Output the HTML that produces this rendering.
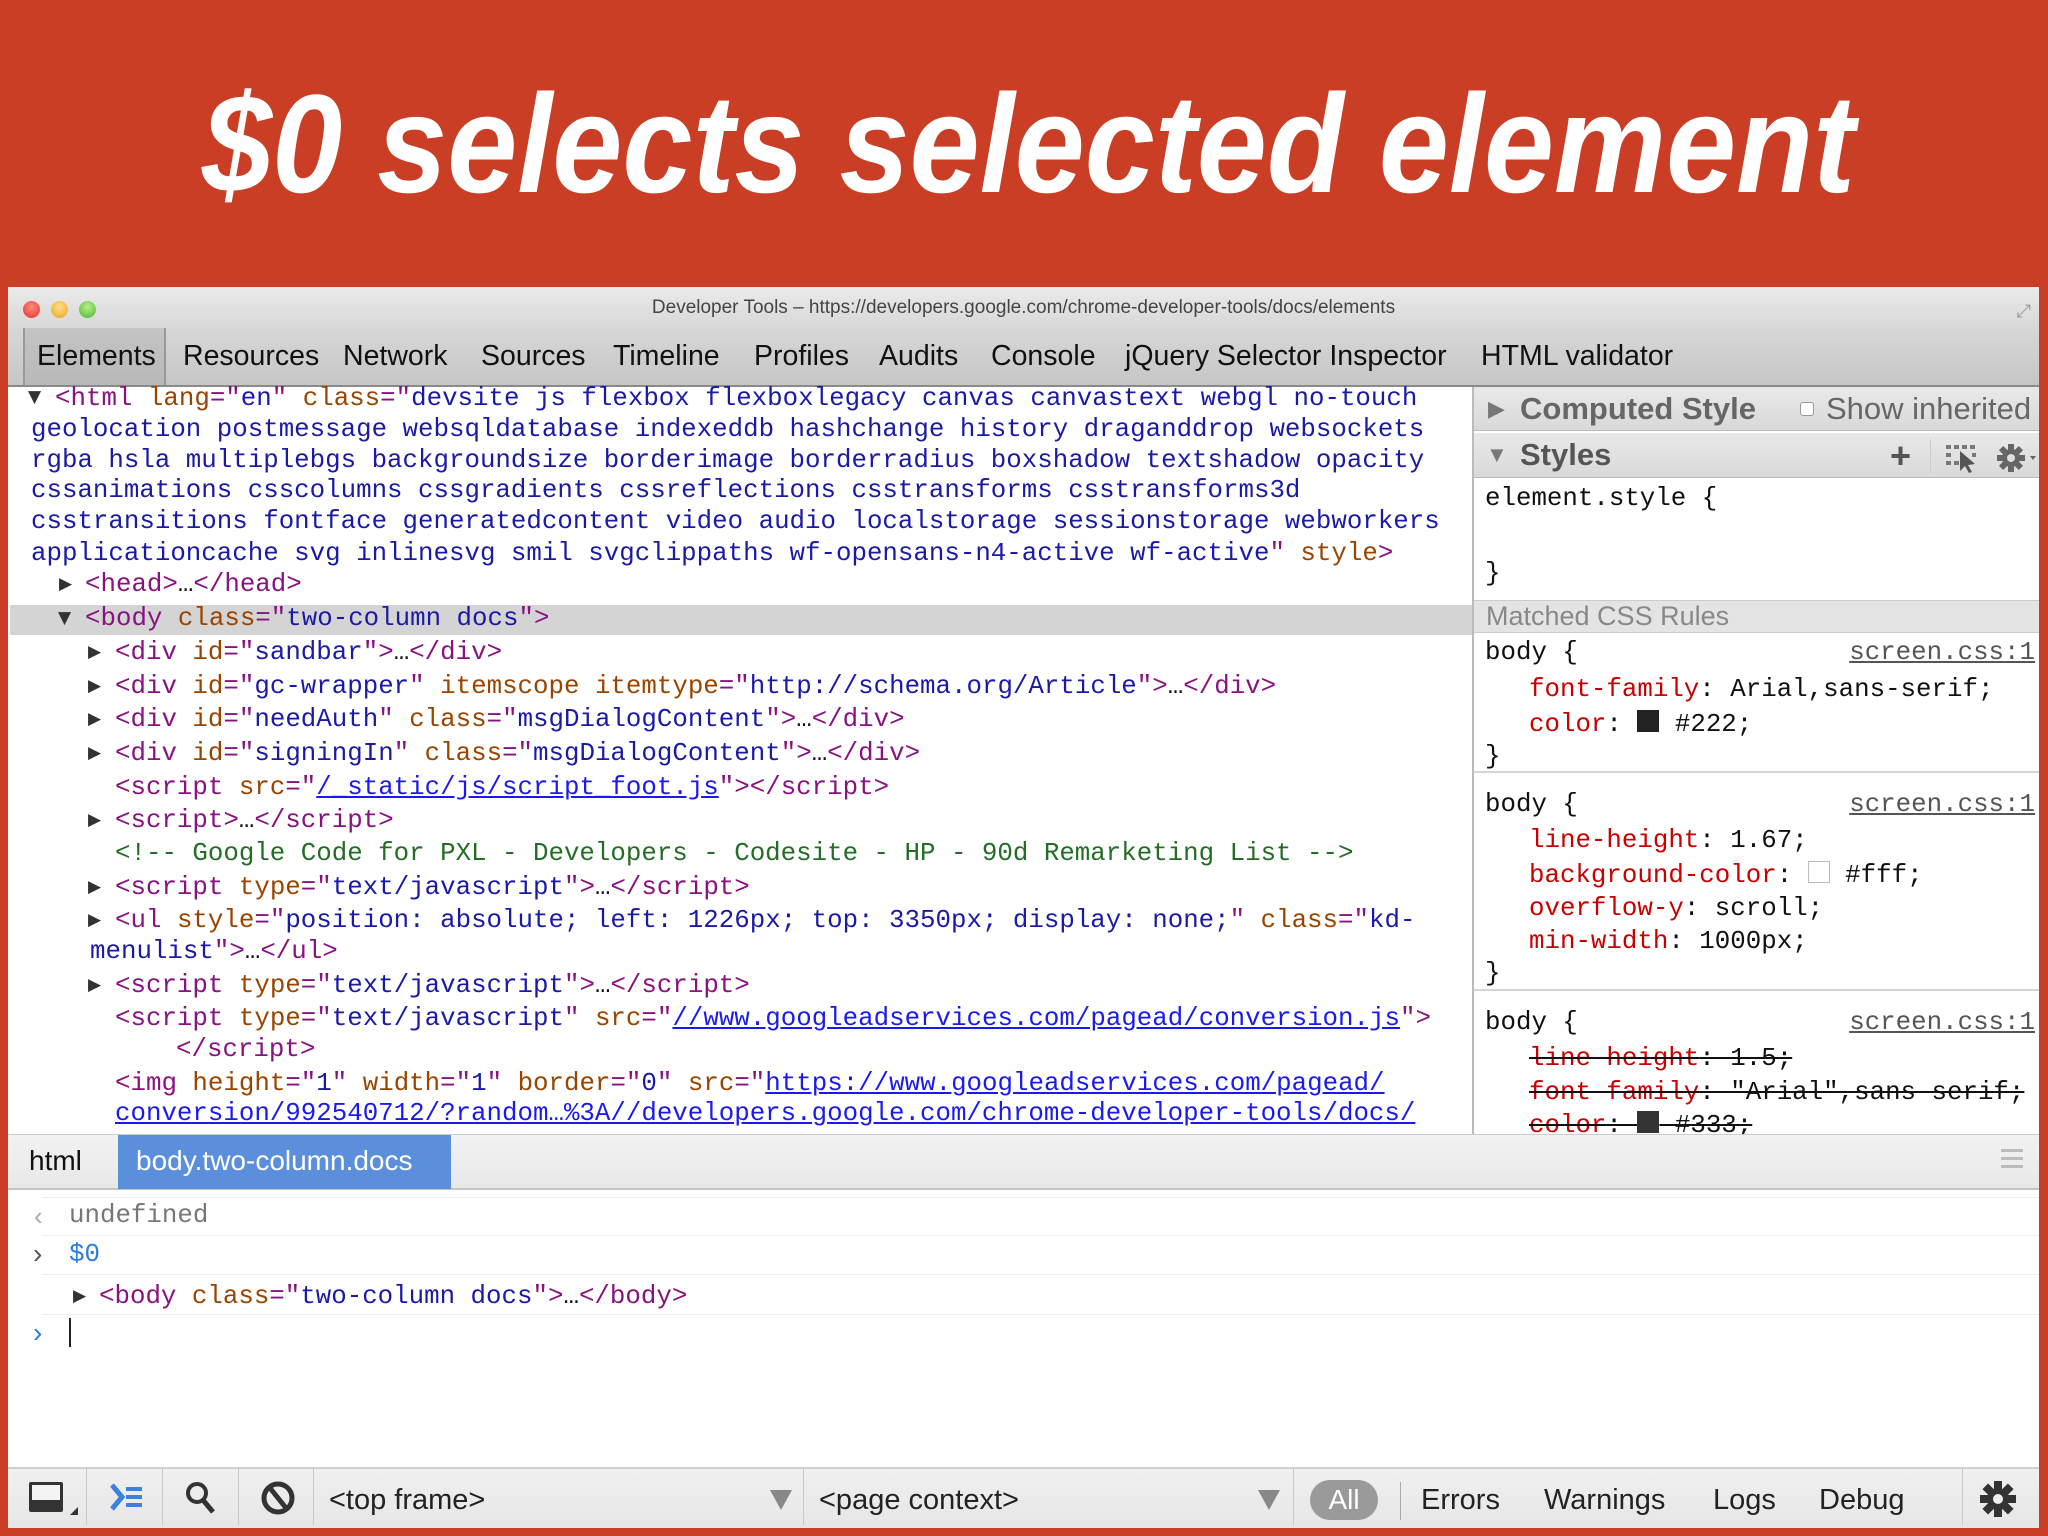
<!DOCTYPE html>
<html><head><meta charset="utf-8">
<style>
*{margin:0;padding:0;box-sizing:border-box}
body{width:2048px;height:1536px;background:#c93e24;position:relative;overflow:hidden;font-family:"Liberation Sans",sans-serif}
.abs{position:absolute}
#title{position:absolute;left:202px;top:54px;width:1836px;font-weight:bold;font-style:italic;font-size:140px;color:#fff;white-space:nowrap;line-height:180px;transform:scaleX(0.9);transform-origin:0 0;letter-spacing:0}
#win{position:absolute;left:8px;top:287px;width:2031px;height:1241px;background:#fff;overflow:hidden}
#top{position:absolute;left:0;top:0;width:100%;height:100px;background:linear-gradient(#ebebeb,#d6d6d6 45%,#c6c6c6);border-bottom:2px solid #8a8a8a}
.tl{position:absolute;top:14px;width:17px;height:17px;border-radius:50%}
.wt{position:absolute;top:10px;left:0;width:100%;text-align:center;font-size:19px;color:#444}
.tab{position:absolute;top:53px;font-size:28.5px;color:#111;white-space:nowrap}
.m{font-family:"Liberation Mono",monospace;font-size:25.8px;white-space:pre;position:absolute;height:31px;line-height:31px}
.t{color:#881280}.a{color:#994500}.v{color:#1a1aa6}.l{color:#1a1aee;text-decoration:underline}.c{color:#236e25}.k{color:#111}
.tri{position:absolute;font-size:17px;color:#333;font-family:"DejaVu Sans",sans-serif;line-height:31px}
#side{position:absolute;left:1464px;top:100px;width:567px;height:747px;border-left:2px solid #bbb;background:#fff}
.sh{position:absolute;left:0;width:100%;background:linear-gradient(#e9e9e9,#d9d9d9);border-bottom:1px solid #bbb}
.p{color:#c80000}
.src{position:absolute;right:4px;color:#555;text-decoration:underline}
.tb{position:absolute;font-size:29px;color:#222;top:1193px;line-height:40px;white-space:nowrap}
.dv{position:absolute;top:1182px;width:1px;height:56px;background:#c8c8c8}
</style></head><body>
<div id="title">$0 selects selected element</div>
<div id="win">
 <div id="top">
  <div class="tl" style="left:15px;background:radial-gradient(circle at 50% 35%,#ff8a80,#e0322b)"></div>
  <div class="tl" style="left:43px;background:radial-gradient(circle at 50% 35%,#ffe08a,#e8a21c)"></div>
  <div class="tl" style="left:71px;background:radial-gradient(circle at 50% 35%,#b5f08a,#4db232)"></div>
  <div class="wt">Developer Tools – https://developers.google.com/chrome-developer-tools/docs/elements</div>
  <div style="position:absolute;right:8px;top:14px;font-size:18px;color:#999">⤢</div>
  <div style="position:absolute;left:15px;top:41px;width:143px;height:57px;background:linear-gradient(#c4c4c4,#b8b8b8);border-left:2px solid #999;border-right:2px solid #999"></div>
  <div class="tab" style="left:29px">Elements</div>
  <div class="tab" style="left:175px">Resources</div>
  <div class="tab" style="left:335px">Network</div>
  <div class="tab" style="left:473px">Sources</div>
  <div class="tab" style="left:605px">Timeline</div>
  <div class="tab" style="left:746px">Profiles</div>
  <div class="tab" style="left:871px">Audits</div>
  <div class="tab" style="left:983px">Console</div>
  <div class="tab" style="left:1117px">jQuery Selector Inspector</div>
  <div class="tab" style="left:1473px">HTML validator</div>
 </div>

 <div class="abs" style="left:2px;top:318px;width:1462px;height:30px;background:#d4d4d4"></div>
 <div class="tri" style="left:20px;top:95px">▼</div>
 <div class="m" style="left:47px;top:96px"><span class="t">&lt;html</span> <span class="a">lang</span><span class="t">="</span><span class="v">en</span><span class="t">"</span> <span class="a">class</span><span class="t">="</span><span class="v">devsite js flexbox flexboxlegacy canvas canvastext webgl no-touch</span></div>
 <div class="m v" style="left:23px;top:127px">geolocation postmessage websqldatabase indexeddb hashchange history draganddrop websockets</div>
 <div class="m v" style="left:23px;top:158px">rgba hsla multiplebgs backgroundsize borderimage borderradius boxshadow textshadow opacity</div>
 <div class="m v" style="left:23px;top:188px">cssanimations csscolumns cssgradients cssreflections csstransforms csstransforms3d</div>
 <div class="m v" style="left:23px;top:219px">csstransitions fontface generatedcontent video audio localstorage sessionstorage webworkers</div>
 <div class="m" style="left:23px;top:251px"><span class="v">applicationcache svg inlinesvg smil svgclippaths wf-opensans-n4-active wf-active</span><span class="t">"</span> <span class="a">style</span><span class="t">&gt;</span></div>
 <div class="tri" style="left:51px;top:282px">▶</div>
 <div class="m" style="left:77px;top:282px"><span class="t">&lt;head&gt;</span><span class="k">…</span><span class="t">&lt;/head&gt;</span></div>
 <div class="tri" style="left:50px;top:316px">▼</div>
 <div class="m" style="left:77px;top:316px"><span class="t">&lt;body</span> <span class="a">class</span><span class="t">="</span><span class="v">two-column docs</span><span class="t">"&gt;</span></div>
 <div class="tri" style="left:80px;top:350px">▶</div>
 <div class="m" style="left:107px;top:350px"><span class="t">&lt;div</span> <span class="a">id</span><span class="t">="</span><span class="v">sandbar</span><span class="t">"&gt;</span><span class="k">…</span><span class="t">&lt;/div&gt;</span></div>
 <div class="tri" style="left:80px;top:384px">▶</div>
 <div class="m" style="left:107px;top:384px"><span class="t">&lt;div</span> <span class="a">id</span><span class="t">="</span><span class="v">gc-wrapper</span><span class="t">"</span> <span class="a">itemscope itemtype</span><span class="t">="</span><span class="v">http://schema.org/Article</span><span class="t">"&gt;</span><span class="k">…</span><span class="t">&lt;/div&gt;</span></div>
 <div class="tri" style="left:80px;top:417px">▶</div>
 <div class="m" style="left:107px;top:417px"><span class="t">&lt;div</span> <span class="a">id</span><span class="t">="</span><span class="v">needAuth</span><span class="t">"</span> <span class="a">class</span><span class="t">="</span><span class="v">msgDialogContent</span><span class="t">"&gt;</span><span class="k">…</span><span class="t">&lt;/div&gt;</span></div>
 <div class="tri" style="left:80px;top:451px">▶</div>
 <div class="m" style="left:107px;top:451px"><span class="t">&lt;div</span> <span class="a">id</span><span class="t">="</span><span class="v">signingIn</span><span class="t">"</span> <span class="a">class</span><span class="t">="</span><span class="v">msgDialogContent</span><span class="t">"&gt;</span><span class="k">…</span><span class="t">&lt;/div&gt;</span></div>
 <div class="m" style="left:107px;top:485px"><span class="t">&lt;script</span> <span class="a">src</span><span class="t">="</span><span class="l">/_static/js/script_foot.js</span><span class="t">"&gt;&lt;/script&gt;</span></div>
 <div class="tri" style="left:80px;top:518px">▶</div>
 <div class="m" style="left:107px;top:518px"><span class="t">&lt;script&gt;</span><span class="k">…</span><span class="t">&lt;/script&gt;</span></div>
 <div class="m c" style="left:107px;top:551px">&lt;!-- Google Code for PXL - Developers - Codesite - HP - 90d Remarketing List --&gt;</div>
 <div class="tri" style="left:80px;top:585px">▶</div>
 <div class="m" style="left:107px;top:585px"><span class="t">&lt;script</span> <span class="a">type</span><span class="t">="</span><span class="v">text/javascript</span><span class="t">"&gt;</span><span class="k">…</span><span class="t">&lt;/script&gt;</span></div>
 <div class="tri" style="left:80px;top:618px">▶</div>
 <div class="m" style="left:107px;top:618px"><span class="t">&lt;ul</span> <span class="a">style</span><span class="t">="</span><span class="v">position: absolute; left: 1226px; top: 3350px; display: none;</span><span class="t">"</span> <span class="a">class</span><span class="t">="</span><span class="v">kd-</span></div>
 <div class="m" style="left:82px;top:649px"><span class="v">menulist</span><span class="t">"&gt;</span><span class="k">…</span><span class="t">&lt;/ul&gt;</span></div>
 <div class="tri" style="left:80px;top:683px">▶</div>
 <div class="m" style="left:107px;top:683px"><span class="t">&lt;script</span> <span class="a">type</span><span class="t">="</span><span class="v">text/javascript</span><span class="t">"&gt;</span><span class="k">…</span><span class="t">&lt;/script&gt;</span></div>
 <div class="m" style="left:107px;top:716px"><span class="t">&lt;script</span> <span class="a">type</span><span class="t">="</span><span class="v">text/javascript</span><span class="t">"</span> <span class="a">src</span><span class="t">="</span><span class="l">//www.googleadservices.com/pagead/conversion.js</span><span class="t">"&gt;</span></div>
 <div class="m t" style="left:168px;top:747px">&lt;/script&gt;</div>
 <div class="m" style="left:107px;top:781px"><span class="t">&lt;img</span> <span class="a">height</span><span class="t">="</span><span class="v">1</span><span class="t">"</span> <span class="a">width</span><span class="t">="</span><span class="v">1</span><span class="t">"</span> <span class="a">border</span><span class="t">="</span><span class="v">0</span><span class="t">"</span> <span class="a">src</span><span class="t">="</span><span class="l">https://www.googleadservices.com/pagead/</span></div>
 <div class="m l" style="left:107px;top:811px">conversion/992540712/?random…%3A//developers.google.com/chrome-developer-tools/docs/</div>

 <div id="side">
  <div class="sh" style="top:0;height:44px"></div>
  <div class="abs" style="left:14px;top:5px;font-size:22px;color:#777;line-height:34px">▶</div>
  <div class="abs" style="left:46px;top:4px;font-size:31px;font-weight:bold;color:#666;line-height:36px">Computed Style</div>
  <div class="abs" style="left:326px;top:15px;width:14px;height:14px;border:1px solid #999;border-radius:3px;background:#fff"></div>
  <div class="abs" style="left:352px;top:4px;font-size:31px;color:#666;line-height:36px;white-space:nowrap">Show inherited</div>
  <div class="sh" style="top:46px;height:45px"></div>
  <div class="abs" style="left:12px;top:50px;font-size:22px;color:#777;line-height:36px">▼</div>
  <div class="abs" style="left:46px;top:50px;font-size:31px;font-weight:bold;color:#555;line-height:36px">Styles</div>
  <div class="abs" style="left:416px;top:52px;font-size:36px;font-weight:bold;color:#555;line-height:34px">+</div>
  <div class="abs" style="left:456px;top:52px;width:1px;height:34px;background:#ccc"></div>
  <svg class="abs" style="left:470px;top:55px" width="40" height="32" viewBox="0 0 40 32"><g fill="#777"><rect x="2" y="3" width="5" height="4"/><rect x="10" y="3" width="5" height="4"/><rect x="18" y="3" width="5" height="4"/><rect x="26" y="3" width="5" height="4"/><rect x="2" y="11" width="5" height="4"/><rect x="2" y="19" width="5" height="4"/><rect x="10" y="19" width="5" height="4"/><rect x="28" y="11" width="4" height="4"/><path d="M16 9 L16 29 L21 24 L25 31 L28 30 L24 23 L31 22 Z" fill="#555"/></g></svg>
  <svg class="abs" style="left:522px;top:54px" width="42" height="34" viewBox="0 0 42 34"><g transform="translate(15,17)" fill="#666"><circle r="9"/><g id="tt"><rect x="-3" y="-14" width="6" height="28"/></g><rect x="-3" y="-14" width="6" height="28" transform="rotate(45)"/><rect x="-3" y="-14" width="6" height="28" transform="rotate(90)"/><rect x="-3" y="-14" width="6" height="28" transform="rotate(135)"/><circle r="4" fill="#ddd"/></g><path d="M34 15 L40 15 L37 19 Z" fill="#666"/></svg>
  <div class="m k" style="left:11px;top:96px">element.style {</div>
  <div class="m k" style="left:11px;top:171px">}</div>
  <div class="abs" style="left:0;top:213px;width:100%;height:33px;background:#e4e4e4;border-top:1px solid #ccc;border-bottom:1px solid #ccc"></div>
  <div class="abs" style="left:12px;top:214px;font-size:27px;color:#888;line-height:31px;white-space:nowrap">Matched CSS Rules</div>
  <div class="m k" style="left:11px;top:250px">body {</div><div class="m src" style="top:250px">screen.css:1</div>
  <div class="m" style="left:55px;top:287px"><span class="p">font-family</span><span class="k">: Arial,sans-serif;</span></div>
  <div class="m" style="left:55px;top:322px"><span class="p">color</span><span class="k">: <span style="display:inline-block;width:22px;height:22px;background:#222;vertical-align:-1px"></span> #222;</span></div>
  <div class="m k" style="left:11px;top:354px">}</div>
  <div class="abs" style="left:0;top:384px;width:100%;height:2px;background:#d4d4d4"></div>
  <div class="m k" style="left:11px;top:402px">body {</div><div class="m src" style="top:402px">screen.css:1</div>
  <div class="m" style="left:55px;top:438px"><span class="p">line-height</span><span class="k">: 1.67;</span></div>
  <div class="m" style="left:55px;top:473px"><span class="p">background-color</span><span class="k">: <span style="display:inline-block;width:22px;height:22px;background:#fff;border:1px solid #bbb;vertical-align:-1px"></span> #fff;</span></div>
  <div class="m" style="left:55px;top:506px"><span class="p">overflow-y</span><span class="k">: scroll;</span></div>
  <div class="m" style="left:55px;top:539px"><span class="p">min-width</span><span class="k">: 1000px;</span></div>
  <div class="m k" style="left:11px;top:571px">}</div>
  <div class="abs" style="left:0;top:602px;width:100%;height:2px;background:#d4d4d4"></div>
  <div class="m k" style="left:11px;top:620px">body {</div><div class="m src" style="top:620px">screen.css:1</div>
  <div class="m" style="left:55px;top:656px;text-decoration:line-through;color:#111"><span class="p">line-height</span>: 1.5;</div>
  <div class="m" style="left:55px;top:690px;text-decoration:line-through;color:#111"><span class="p">font-family</span>: "Arial",sans-serif;</div>
  <div class="m" style="left:55px;top:723px;text-decoration:line-through;color:#111"><span class="p">color</span>: <span style="display:inline-block;width:22px;height:22px;background:#333;vertical-align:-1px"></span> #333;</div>
 </div>

 <div class="abs" style="left:0;top:847px;width:100%;height:56px;background:linear-gradient(#f2f2f2,#e8e8e8);border-top:1px solid #ccc;border-bottom:2px solid #c4c4c4"></div>
 <div class="abs" style="left:21px;top:854px;font-size:28px;color:#111;line-height:40px">html</div>
 <div class="abs" style="left:110px;top:848px;width:333px;height:54px;background:#5b8fdb"></div>
 <div class="abs" style="left:128px;top:854px;font-size:28px;color:#fff;line-height:40px;white-space:nowrap">body.two-column.docs</div>
 <div class="abs" style="left:1993px;top:862px;width:22px;height:3px;background:#bbb;box-shadow:0 8px 0 #bbb,0 16px 0 #bbb"></div>

 <div class="abs" style="left:34px;top:910px;width:1997px;height:1px;background:#eee"></div>
 <div class="abs" style="left:26px;top:912px;font-size:26px;color:#aaa;line-height:34px">‹</div>
 <div class="m" style="left:61px;top:913px;color:#777">undefined</div>
 <div class="abs" style="left:34px;top:948px;width:1997px;height:1px;background:#eee"></div>
 <div class="abs" style="left:25px;top:950px;font-size:28px;color:#555;line-height:34px">›</div>
 <div class="m" style="left:61px;top:952px;color:#2a7de1">$0</div>
 <div class="abs" style="left:34px;top:987px;width:1997px;height:1px;background:#eee"></div>
 <div class="tri" style="left:65px;top:994px">▶</div>
 <div class="m" style="left:91px;top:994px"><span class="t">&lt;body</span> <span class="a">class</span><span class="t">="</span><span class="v">two-column docs</span><span class="t">"&gt;</span><span class="k">…</span><span class="t">&lt;/body&gt;</span></div>
 <div class="abs" style="left:34px;top:1027px;width:1997px;height:1px;background:#eee"></div>
 <div class="abs" style="left:25px;top:1029px;font-size:28px;color:#2a7de1;line-height:34px">›</div>
 <div class="abs" style="left:61px;top:1031px;width:2px;height:29px;background:#222"></div>

 <div class="abs" style="left:0;top:1180px;width:100%;height:61px;background:linear-gradient(#f0f0f0,#e6e6e6);border-top:2px solid #cfcfcf"></div>
 <div class="abs" style="left:21px;top:1195px;width:34px;height:30px;background:#333;border-radius:2px"><div style="margin:3px;height:15px;background:#f4f4f4"></div></div>
 <div class="abs" style="left:62px;top:1220px;width:0;height:0;border-left:8px solid transparent;border-bottom:8px solid #333"></div>
 <div class="dv" style="left:78px"></div>
 <svg class="abs" style="left:98px;top:1193px" width="40" height="34" viewBox="0 0 40 34"><path d="M6 5 L16 17 L6 29" stroke="#3b82e0" stroke-width="5" fill="none"/><rect x="20" y="7" width="16" height="4" fill="#3b82e0"/><rect x="20" y="15" width="16" height="4" fill="#3b82e0"/><rect x="20" y="23" width="16" height="4" fill="#3b82e0"/></svg>
 <div class="dv" style="left:154px"></div>
 <svg class="abs" style="left:175px;top:1192px" width="36" height="38" viewBox="0 0 36 38"><circle cx="14" cy="14" r="9" stroke="#333" stroke-width="4" fill="none"/><path d="M20 21 L30 33" stroke="#333" stroke-width="5"/></svg>
 <div class="dv" style="left:230px"></div>
 <svg class="abs" style="left:251px;top:1192px" width="38" height="38" viewBox="0 0 38 38"><circle cx="19" cy="19" r="14" stroke="#333" stroke-width="5" fill="none"/><path d="M11 9 L27 29" stroke="#333" stroke-width="5"/></svg>
 <div class="dv" style="left:305px"></div>
 <div class="tb" style="left:321px">&lt;top frame&gt;</div>
 <div class="abs" style="left:762px;top:1203px;width:0;height:0;border-left:11px solid transparent;border-right:11px solid transparent;border-top:20px solid #888"></div>
 <div class="dv" style="left:795px"></div>
 <div class="tb" style="left:811px">&lt;page context&gt;</div>
 <div class="abs" style="left:1250px;top:1203px;width:0;height:0;border-left:11px solid transparent;border-right:11px solid transparent;border-top:20px solid #888"></div>
 <div class="dv" style="left:1285px"></div>
 <div class="abs" style="left:1302px;top:1193px;width:68px;height:40px;border-radius:20px;background:#9a9a9a;color:#fff;font-size:28px;text-align:center;line-height:40px">All</div>
 <div class="abs" style="left:1392px;top:1195px;width:1px;height:38px;background:#aaa"></div>
 <div class="tb" style="left:1413px">Errors</div>
 <div class="tb" style="left:1536px">Warnings</div>
 <div class="tb" style="left:1705px">Logs</div>
 <div class="tb" style="left:1811px">Debug</div>
 <div class="dv" style="left:1954px"></div>
 <svg class="abs" style="left:1970px;top:1192px" width="40" height="40" viewBox="0 0 40 40"><g transform="translate(20,20)" fill="#333"><circle r="11"/><rect x="-4" y="-18" width="8" height="36"/><rect x="-4" y="-18" width="8" height="36" transform="rotate(45)"/><rect x="-4" y="-18" width="8" height="36" transform="rotate(90)"/><rect x="-4" y="-18" width="8" height="36" transform="rotate(135)"/><circle r="5" fill="#eee"/></g></svg>
</div>
</body></html>
